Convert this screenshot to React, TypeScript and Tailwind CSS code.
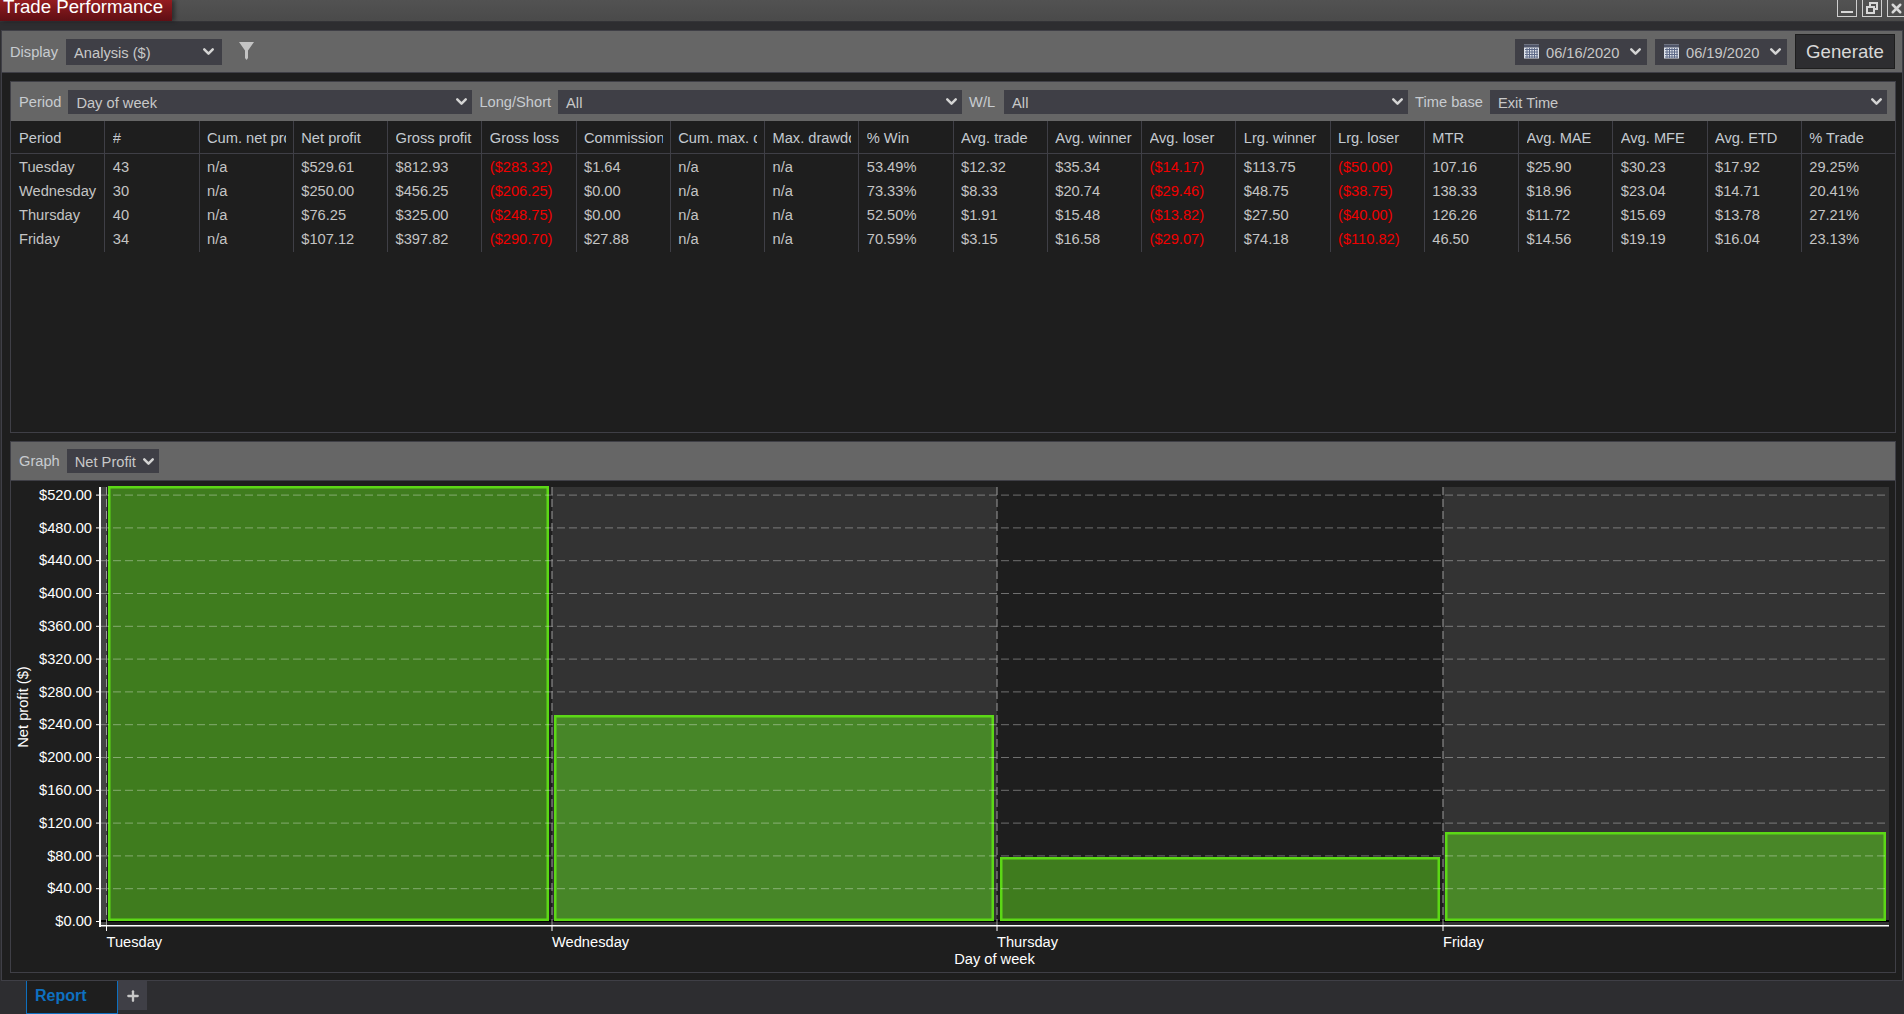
import {ChevronDown, Plus, X} from 'lucide-react';

const columns = [
  'Period', '#', 'Cum. net profit', 'Net profit', 'Gross profit', 'Gross loss', 'Commission', 'Cum. max. drawdown',
  'Max. drawdown', '% Win', 'Avg. trade', 'Avg. winner', 'Avg. loser', 'Lrg. winner', 'Lrg. loser', 'MTR',
  'Avg. MAE', 'Avg. MFE', 'Avg. ETD', '% Trade',
];

const rows = [
  ['Tuesday', '43', 'n/a', '$529.61', '$812.93', '($283.32)', '$1.64', 'n/a', 'n/a', '53.49%', '$12.32', '$35.34', '($14.17)', '$113.75', '($50.00)', '107.16', '$25.90', '$30.23', '$17.92', '29.25%'],
  ['Wednesday', '30', 'n/a', '$250.00', '$456.25', '($206.25)', '$0.00', 'n/a', 'n/a', '73.33%', '$8.33', '$20.74', '($29.46)', '$48.75', '($38.75)', '138.33', '$18.96', '$23.04', '$14.71', '20.41%'],
  ['Thursday', '40', 'n/a', '$76.25', '$325.00', '($248.75)', '$0.00', 'n/a', 'n/a', '52.50%', '$1.91', '$15.48', '($13.82)', '$27.50', '($40.00)', '126.26', '$11.72', '$15.69', '$13.78', '27.21%'],
  ['Friday', '34', 'n/a', '$107.12', '$397.82', '($290.70)', '$27.88', 'n/a', 'n/a', '70.59%', '$3.15', '$16.58', '($29.07)', '$74.18', '($110.82)', '46.50', '$14.56', '$19.19', '$16.04', '23.13%'],
];

const yTicks = Array.from({length: 14}, (_, i) => i * 40);
const yOf = (v: number) => 921 - v * 0.82;

const bands = [
  {x: 107, w: 445, fill: '#1e1e1e'},
  {x: 552, w: 445, fill: '#333333'},
  {x: 997, w: 446, fill: '#1e1e1e'},
  {x: 1443, w: 446, fill: '#333333'},
];

const bars = [
  {x: 108, w: 441, top: 486, fill: '#3f7c1e'},
  {x: 554, w: 440, top: 715, fill: '#478628'},
  {x: 1000, w: 440, top: 857, fill: '#3f7c1e'},
  {x: 1445, w: 441, top: 832, fill: '#498728'},
];

const days = [
  {x: 106.5, label: 'Tuesday'},
  {x: 552, label: 'Wednesday'},
  {x: 997, label: 'Thursday'},
  {x: 1443, label: 'Friday'},
];

function Select({label, className}: {label: string; className: string}) {
  return (
    <div className={`flex shrink-0 items-center justify-between bg-[#3f3f46] pl-2 text-[#c8c8c8] ${className}`}>
      <span className="whitespace-nowrap pt-[2px]">{label}</span>
      <ChevronDown size={17} strokeWidth={3.5} className="shrink-0 text-[#d4d4d4]" />
    </div>
  );
}

function CalendarIcon() {
  return (
    <svg width="15" height="15" viewBox="0 0 15 15" className="shrink-0">
      <rect x="0" y="0.5" width="15" height="14" fill="#dfe3ea" />
      <rect x="0" y="0.5" width="15" height="3" fill="#50566a" />
      <path d="M1 5.5h13M1 8h13M1 10.5h13M1 13h13M3 4v10M5.5 4v10M8 4v10M10.5 4v10M13 4v10" stroke="#5e6a88" strokeWidth="1" />
    </svg>
  );
}

function DatePicker({value}: {value: string}) {
  return (
    <div className="flex h-[26px] w-[132px] items-center bg-[#3f3f46] pl-[9px] pr-[3px] text-[#c8c8c8]">
      <CalendarIcon />
      <span className="ml-[7px] pt-[2px]">{value}</span>
      <ChevronDown size={17} strokeWidth={3.5} className="ml-auto text-[#d4d4d4]" />
    </div>
  );
}

function TradeTable() {
  return (
    <div className="grid grid-cols-[repeat(20,94.25px)]">
      {columns.map((col, i) => (
        <div
          key={col}
          className={`h-[33px] overflow-hidden whitespace-nowrap border-b border-[#3f3f46] pr-[7px] leading-[34px] text-[#c4cad0] ${i === 0 ? 'pl-2' : 'pl-[7.5px]'} ${i < 19 ? 'border-r' : ''}`}
        >
          <div className="overflow-hidden">{col}</div>
        </div>
      ))}
      {rows.flat().map((cell, i) => {
        const row = Math.floor(i / 20);
        return (
          <div
            key={i}
            className={`overflow-hidden whitespace-nowrap border-[#3f3f46] pr-1 ${row < 2 ? 'leading-[27px]' : 'leading-[25.5px]'} ${row % 2 === 0 ? 'h-6' : 'h-[25px]'} ${i % 20 === 0 ? 'pl-2' : 'pl-[7.5px]'} ${i % 20 < 19 ? 'border-r' : ''} ${cell.startsWith('(') ? 'text-[#f00000]' : 'text-[#c4c4c4]'}`}
          >
            {cell}
          </div>
        );
      })}
    </div>
  );
}

function Chart() {
  return (
    <svg width="1883" height="491" viewBox="11 481 1883 491" className="block text-[14.67px]">
      <rect x="101" y="487" width="6" height="438" fill="#444444" />
      {bands.map(b => (
        <rect key={b.x} x={b.x} y="487" width={b.w} height="438" fill={b.fill} />
      ))}
      <rect x="101" y="920" width="1788" height="2" fill="#000000" />
      {bars.map(b => (
        <rect
          key={b.x}
          x={b.x + 1.25}
          y={b.top + 1.25}
          width={b.w - 2.5}
          height={921 - b.top - 2.5}
          fill={b.fill}
          stroke="#5cd816"
          strokeWidth="2.5"
        />
      ))}
      {yTicks.slice(1).map(v => (
        <line key={v} x1="101" x2="1889" y1={yOf(v) + 0.5} y2={yOf(v) + 0.5} stroke="#ffffff" strokeOpacity="0.36" strokeDasharray="8 4" />
      ))}
      {days.map(d => (
        <line key={d.x} x1={d.x} x2={d.x} y1="487" y2="925" stroke="#9a9a9a" strokeDasharray="8 4" />
      ))}
      {yTicks.map(v => (
        <g key={v}>
          <line x1="96" x2="100" y1={yOf(v) + 0.5} y2={yOf(v) + 0.5} stroke="#ffffff" />
          <text x="92" y={Math.round(yOf(v) + 5.2)} textAnchor="end" fill="#ffffff">
            ${v}.00
          </text>
        </g>
      ))}
      <rect x="99" y="487" width="2" height="440" fill="#ffffff" />
      <rect x="99" y="925" width="1790" height="1.5" fill="#ffffff" />
      {days.map(d => (
        <g key={d.label}>
          <line x1={d.x} x2={d.x} y1="926" y2="931" stroke="#ffffff" />
          <text x={d.x} y="947" fill="#ffffff">
            {d.label}
          </text>
        </g>
      ))}
      <text x="994.5" y="964" textAnchor="middle" fill="#ffffff">
        Day of week
      </text>
      <text x="28" y="707" textAnchor="middle" fill="#ffffff" transform="rotate(-90 28 707)">
        Net profit ($)
      </text>
    </svg>
  );
}

export default function App() {
  return (
    <div className="flex h-[1014px] w-[1904px] flex-col overflow-hidden bg-[#2d2d30] font-['Liberation_Sans',Arial,sans-serif] text-[14.67px]">
      <div className="flex h-[22px] shrink-0 items-start justify-between border-b border-[#333337] bg-gradient-to-b from-[#525252] to-[#4a4a4a]">
        <div className="h-[21px] w-[172px] whitespace-nowrap bg-gradient-to-b from-[#951c20] to-[#5e0f14] pl-[3px] text-[18.67px] leading-[13px] text-white shadow-[3px_0_4px_rgba(0,0,0,0.4)]">
          Trade Performance
        </div>
        <div className="flex gap-[5px]">
          <div className="flex h-[17px] w-[20px] items-end justify-center border border-t-0 border-[#cfcfcf] pb-[3px]">
            <div className="h-[2px] w-[12px] bg-[#d8d8d8]" />
          </div>
          <div className="flex h-[17px] w-[20px] items-center justify-center border border-t-0 border-[#cfcfcf]">
            <svg width="12" height="12" viewBox="0 0 12 12" fill="none" stroke="#d8d8d8" strokeWidth="2">
              <rect x="4" y="1" width="7" height="6" />
              <rect x="1" y="5" width="7" height="6" fill="#4e4e4e" />
            </svg>
          </div>
          <div className="flex h-[17px] w-[17px] items-center justify-center border-l border-b border-[#cfcfcf]">
            <X size={15} strokeWidth={4} className="text-[#d8d8d8]" />
          </div>
        </div>
      </div>

      <div className="mx-px mt-2 flex flex-col border border-[#3f3f46] bg-[#1e1e1e]">
        <div className="flex h-[42px] items-center border-b border-[#3f3f46] bg-[#666666] pl-[8px] pr-[7px] text-[#c8ccd0]">
          <span>Display</span>
          <Select label="Analysis ($)" className="ml-2 h-[26px] w-[156px] pr-[5px]" />
          <svg width="15" height="18" viewBox="0 0 15 18" className="ml-[17px] -mt-[2px]">
            <path d="M0 0h15L9 8.5V16L7.5 18 6 16V8.5z" fill="#c4c4c4" />
          </svg>
          <div className="ml-auto flex items-center gap-2">
            <DatePicker value="06/16/2020" />
            <DatePicker value="06/19/2020" />
            <div className="flex h-[35px] w-[100px] items-center justify-center border border-[#1e1e1e] bg-[#2d2d30] text-[18.67px] text-[#d8d8d8]">
              Generate
            </div>
          </div>
        </div>

        <div className="flex flex-col gap-2 px-2 pb-[7px] pt-2">
          <div className="h-[352px] w-[1886px] border border-[#3f3f46]">
            <div className="flex h-[39px] items-center gap-[7px] bg-[#666666] pl-2 pr-2 text-[#c8ccd0]">
              <span>Period</span>
              <Select label="Day of week" className="h-6 w-[404px] pr-[2px]" />
              <span>Long/Short</span>
              <Select label="All" className="h-6 w-[404px] pr-[2px]" />
              <span className="w-[28px]">W/L</span>
              <Select label="All" className="h-6 w-[404px] pr-[2px]" />
              <span>Time base</span>
              <Select label="Exit Time" className="h-6 grow pr-[2px]" />
            </div>
            <TradeTable />
          </div>

          <div className="h-[532px] w-[1886px] border border-[#3f3f46]">
            <div className="flex h-[39px] items-center gap-[7px] border-b border-[#3f3f46] bg-[#666666] pl-2 text-[#c8ccd0]">
              <span>Graph</span>
              <Select label="Net Profit" className="h-6 w-[92px] pr-[2px]" />
            </div>
            <Chart />
          </div>
        </div>
      </div>

      <div className="flex flex-1">
        <div className="ml-[26px] flex h-full w-[92px] items-center border-x border-b border-[#0e70c0] bg-[#1e1e1e] pb-[2px] pl-2 text-[16px] font-bold text-[#0e70c0]">
          Report
        </div>
        <div className="flex h-[29px] w-[29px] items-center justify-center bg-[#3f3f46] text-[#c8c8c8]">
          <Plus size={16} strokeWidth={3.5} />
        </div>
      </div>
    </div>
  );
}
